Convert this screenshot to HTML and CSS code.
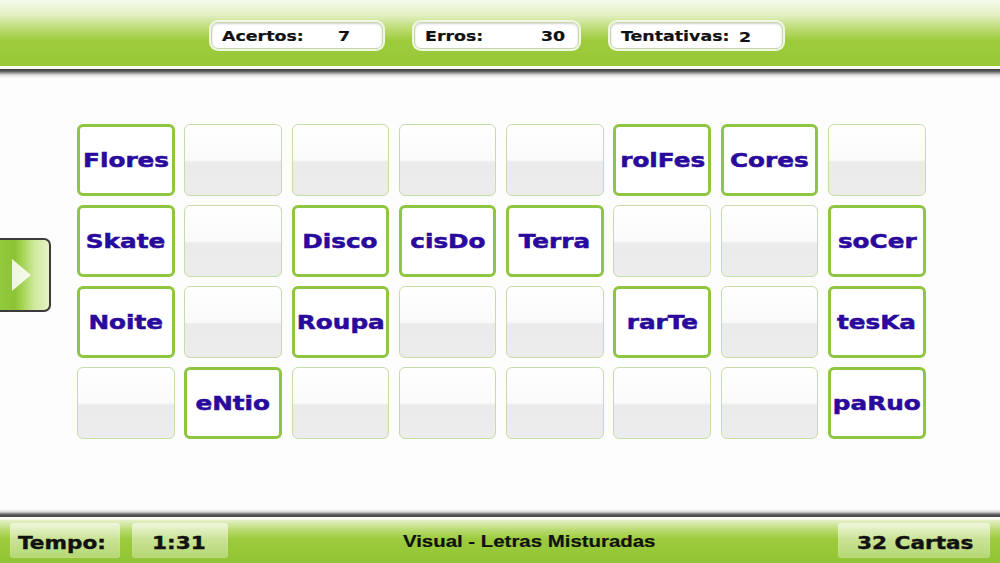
FILE: index.html
```html
<!DOCTYPE html>
<html>
<head>
	<meta charset="utf-8" />
	<title>Jogo da Memória</title>
	<link rel="stylesheet" href="styles.css">
</head>
<body>
<div class="screen">
	<div class="topbar">
		<div class="score score-hits"><span class="label"><span class="wide">Acertos:</span></span><span class="value"><span class="wide">7</span></span></div>
		<div class="score score-errors"><span class="label"><span class="wide">Erros:</span></span><span class="value"><span class="wide">30</span></span></div>
		<div class="score score-tries"><span class="label"><span class="wide">Tentativas:</span></span><span class="value"><span class="wide">2</span></span></div>
	</div>
	<div class="topline"></div>

	<div class="board">
		<div class="side-tab">
			<svg width="22" height="34" viewBox="0 0 22 34"><polygon points="2,1 21,17 2,33" fill="#ffffff" fill-opacity="0.85"/></svg>
		</div>
		<div id="cards">
			<!-- linha 1 -->
			<div class="card open"><span class="wide">Flores</span></div>
			<div class="card"></div>
			<div class="card"></div>
			<div class="card"></div>
			<div class="card"></div>
			<div class="card open"><span class="wide">rolFes</span></div>
			<div class="card open"><span class="wide">Cores</span></div>
			<div class="card"></div>
			<!-- linha 2 -->
			<div class="card open"><span class="wide">Skate</span></div>
			<div class="card"></div>
			<div class="card open"><span class="wide">Disco</span></div>
			<div class="card open"><span class="wide">cisDo</span></div>
			<div class="card open"><span class="wide">Terra</span></div>
			<div class="card"></div>
			<div class="card"></div>
			<div class="card open"><span class="wide">soCer</span></div>
			<!-- linha 3 -->
			<div class="card open"><span class="wide">Noite</span></div>
			<div class="card"></div>
			<div class="card open"><span class="wide">Roupa</span></div>
			<div class="card"></div>
			<div class="card"></div>
			<div class="card open"><span class="wide">rarTe</span></div>
			<div class="card"></div>
			<div class="card open"><span class="wide">tesKa</span></div>
			<!-- linha 4 -->
			<div class="card"></div>
			<div class="card open"><span class="wide">eNtio</span></div>
			<div class="card"></div>
			<div class="card"></div>
			<div class="card"></div>
			<div class="card"></div>
			<div class="card"></div>
			<div class="card open"><span class="wide">paRuo</span></div>
		</div>
	</div>

	<div class="bottomline"></div>
	<div class="bottombar">
		<div class="pill pill-time"><span class="wide">Tempo:</span></div>
		<div class="pill pill-clock"><span class="wide">1:31</span></div>
		<div class="mode"><span class="wide">Visual - Letras Misturadas</span></div>
		<div class="pill pill-count"><span class="wide">32 Cartas</span></div>
	</div>
</div>
</body>
</html>
```

FILE: styles.css
```css
* {
	margin: 0;
	padding: 0;
	box-sizing: border-box;
}
body {
	width: 1000px;
	height: 563px;
	overflow: hidden;
	background: #fdfdfd;
	font-family: "DejaVu Sans", "Liberation Sans", sans-serif;
}
.screen {
	display: flex;
	flex-direction: column;
	height: 563px;
	position: relative;
}
.wide {
	display: inline-block;
	transform: scaleX(1.2);
	transform-origin: left center;
	white-space: nowrap;
}

/* barra de cima */
.topbar {
	height: 66px;
	display: flex;
	gap: 31px;
	padding-top: 22px;
	padding-left: 211px;
	background: linear-gradient(#f5faec 0%, #e2f0c4 22%, #b9da6e 45%, #9dcb3c 62%, #97c836 100%);
}
.score {
	height: 27px;
	display: flex;
	align-items: center;
	padding-left: 10px;
	background: #fff;
	border: 1px solid #c9d6b0;
	border-radius: 7px;
	box-shadow: 0 0 0 2px #f1f7e2, inset 0 1px 2px #d0d0d0;
	font-weight: bold;
	font-size: 14.5px;
	color: #111;
	-webkit-text-stroke: 0.2px #111;
}
.score-hits { width: 172px; }
.score-errors { width: 165px; }
.score-tries { width: 173px; }
.score .label {
	width: 116px;
}
.score-tries .label {
	width: 118px;
}
.score-tries .value {
	padding-top: 3px;
}
.topline {
	height: 12px;
	background: linear-gradient(#ffffff 0, #f4f8ec 3px, #3d3d3d 3px, #555 5px, #9a9a9a 7px, #dcdcdc 9px, #fdfdfd 12px);
}

/* tabuleiro */
.board {
	flex: 1;
	padding-top: 46px;
	padding-left: 77px;
}
.side-tab {
	position: absolute;
	left: 0;
	top: 238px;
	width: 51px;
	height: 74px;
	display: flex;
	align-items: center;
	padding-left: 10px;
	border: 2px solid #3b3b3b;
	border-left: none;
	border-radius: 0 7px 7px 0;
	background: linear-gradient(to right, #94ca3e 0%, #8cc334 30%, #a8d65a 48%, #cfe89c 70%, #e6f3c8 100%);
}
#cards {
	display: grid;
	grid-template-columns: repeat(8, 97.5px);
	grid-auto-rows: 72px;
	column-gap: 9.8px;
	row-gap: 9px;
}
.card {
	border: 1.5px solid #c8dca6;
	border-radius: 6px;
	background: linear-gradient(#ffffff 0%, #fafafa 50%, #ebebeb 53%, #ececec 100%);
}
.card.open {
	display: flex;
	align-items: center;
	justify-content: center;
	border: 3px solid #8fc641;
	background: #fff;
	color: #2a0a9c;
	font-weight: bold;
	font-size: 19px;
	-webkit-text-stroke: 0.5px #2a0a9c;
}
.card.open .wide {
	transform: scaleX(1.3);
	transform-origin: center center;
}

/* barra de baixo */
.bottomline {
	height: 11px;
	background: linear-gradient(#fdfdfd 0, #d6d6d6 3px, #6e6e6e 5px, #444 7px, #555 8px, #ffffff 8px, #f0f6e4 11px);
}
.bottombar {
	height: 43px;
	display: flex;
	align-items: center;
	padding: 3px 10px 5px 10px;
	background: linear-gradient(#e4f1c8 0%, #b6d96a 25%, #9ccb3c 45%, #91c535 100%);
}
.pill {
	height: 35px;
	display: flex;
	align-items: center;
	border-radius: 4px;
	background: linear-gradient(rgba(255,255,255,0.6), rgba(255,255,255,0.3));
	box-shadow: inset 0 0 1px rgba(255,255,255,0.8);
	font-weight: bold;
	font-size: 18px;
	color: #111;
	-webkit-text-stroke: 0.4px #111;
}
.pill-time {
	width: 110px;
	padding-left: 8px;
	padding-top: 3px;
}
.pill-clock {
	width: 96px;
	margin-left: 12px;
	padding-left: 20px;
	padding-top: 3px;
}
.pill-count {
	width: 152px;
	padding-left: 19px;
	padding-top: 3px;
}
.mode {
	flex: 1;
	text-align: center;
	padding-right: 8px;
	padding-top: 2px;
	font-family: "Liberation Sans", Arial, sans-serif;
	font-weight: bold;
	font-size: 17px;
	color: #111;
	-webkit-text-stroke: 0.2px #111;
}
.mode .wide {
	transform-origin: center center;
}
```
